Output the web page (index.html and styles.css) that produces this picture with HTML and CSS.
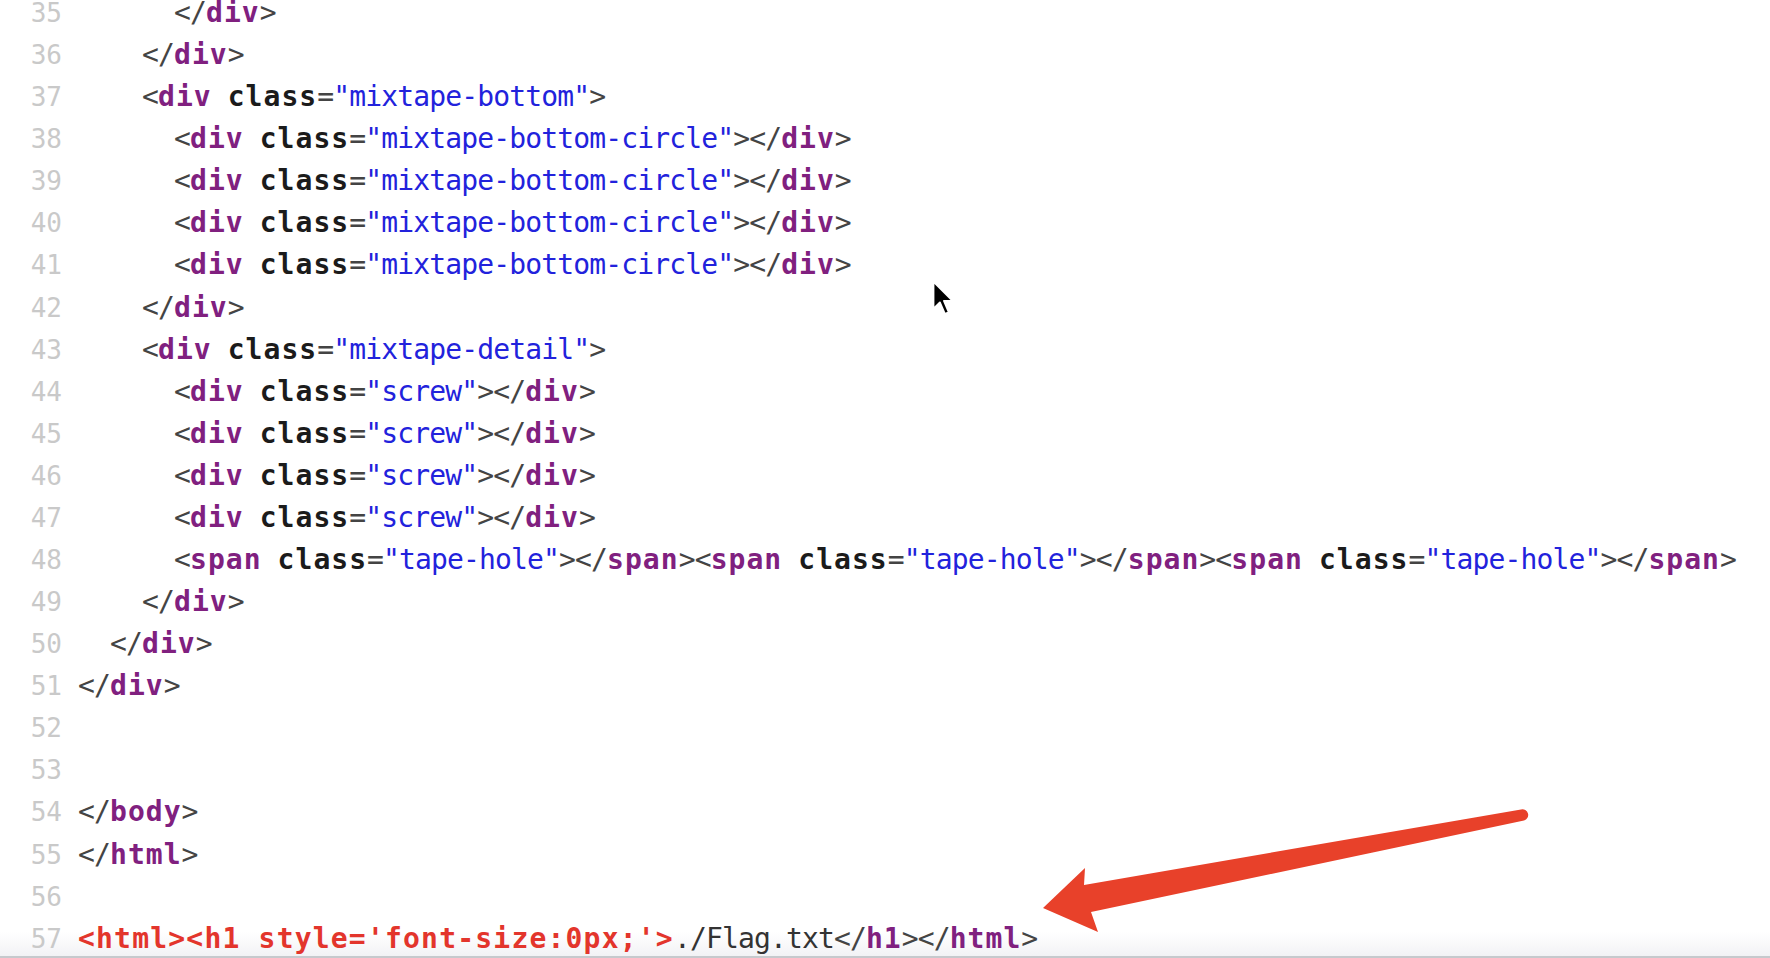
FILE: index.html
```html
<!DOCTYPE html>
<html lang="en">
<head>
    <meta charset="UTF-8">
    <title>mixtape.html</title>
    <link rel="stylesheet" href="styles.css">
</head>
<body>
    <div class="editor">
        <div class="line"><span class="ln">35</span><span class="code i3"><span class="p">&lt;/</span><span class="t">div</span><span class="p">&gt;</span></span></div>
        <div class="line"><span class="ln">36</span><span class="code i2"><span class="p">&lt;/</span><span class="t">div</span><span class="p">&gt;</span></span></div>
        <div class="line"><span class="ln">37</span><span class="code i2"><span class="p">&lt;</span><span class="t">div</span> <span class="a">class</span><span class="p">=</span><span class="s">"mixtape-bottom"</span><span class="p">&gt;</span></span></div>
        <div class="line"><span class="ln">38</span><span class="code i3"><span class="p">&lt;</span><span class="t">div</span> <span class="a">class</span><span class="p">=</span><span class="s">"mixtape-bottom-circle"</span><span class="p">&gt;&lt;/</span><span class="t">div</span><span class="p">&gt;</span></span></div>
        <div class="line"><span class="ln">39</span><span class="code i3"><span class="p">&lt;</span><span class="t">div</span> <span class="a">class</span><span class="p">=</span><span class="s">"mixtape-bottom-circle"</span><span class="p">&gt;&lt;/</span><span class="t">div</span><span class="p">&gt;</span></span></div>
        <div class="line"><span class="ln">40</span><span class="code i3"><span class="p">&lt;</span><span class="t">div</span> <span class="a">class</span><span class="p">=</span><span class="s">"mixtape-bottom-circle"</span><span class="p">&gt;&lt;/</span><span class="t">div</span><span class="p">&gt;</span></span></div>
        <div class="line"><span class="ln">41</span><span class="code i3"><span class="p">&lt;</span><span class="t">div</span> <span class="a">class</span><span class="p">=</span><span class="s">"mixtape-bottom-circle"</span><span class="p">&gt;&lt;/</span><span class="t">div</span><span class="p">&gt;</span></span></div>
        <div class="line"><span class="ln">42</span><span class="code i2"><span class="p">&lt;/</span><span class="t">div</span><span class="p">&gt;</span></span></div>
        <div class="line"><span class="ln">43</span><span class="code i2"><span class="p">&lt;</span><span class="t">div</span> <span class="a">class</span><span class="p">=</span><span class="s">"mixtape-detail"</span><span class="p">&gt;</span></span></div>
        <div class="line"><span class="ln">44</span><span class="code i3"><span class="p">&lt;</span><span class="t">div</span> <span class="a">class</span><span class="p">=</span><span class="s">"screw"</span><span class="p">&gt;&lt;/</span><span class="t">div</span><span class="p">&gt;</span></span></div>
        <div class="line"><span class="ln">45</span><span class="code i3"><span class="p">&lt;</span><span class="t">div</span> <span class="a">class</span><span class="p">=</span><span class="s">"screw"</span><span class="p">&gt;&lt;/</span><span class="t">div</span><span class="p">&gt;</span></span></div>
        <div class="line"><span class="ln">46</span><span class="code i3"><span class="p">&lt;</span><span class="t">div</span> <span class="a">class</span><span class="p">=</span><span class="s">"screw"</span><span class="p">&gt;&lt;/</span><span class="t">div</span><span class="p">&gt;</span></span></div>
        <div class="line"><span class="ln">47</span><span class="code i3"><span class="p">&lt;</span><span class="t">div</span> <span class="a">class</span><span class="p">=</span><span class="s">"screw"</span><span class="p">&gt;&lt;/</span><span class="t">div</span><span class="p">&gt;</span></span></div>
        <div class="line"><span class="ln">48</span><span class="code i3"><span class="p">&lt;</span><span class="t">span</span> <span class="a">class</span><span class="p">=</span><span class="s">"tape-hole"</span><span class="p">&gt;&lt;/</span><span class="t">span</span><span class="p">&gt;&lt;</span><span class="t">span</span> <span class="a">class</span><span class="p">=</span><span class="s">"tape-hole"</span><span class="p">&gt;&lt;/</span><span class="t">span</span><span class="p">&gt;&lt;</span><span class="t">span</span> <span class="a">class</span><span class="p">=</span><span class="s">"tape-hole"</span><span class="p">&gt;&lt;/</span><span class="t">span</span><span class="p">&gt;</span></span></div>
        <div class="line"><span class="ln">49</span><span class="code i2"><span class="p">&lt;/</span><span class="t">div</span><span class="p">&gt;</span></span></div>
        <div class="line"><span class="ln">50</span><span class="code i1"><span class="p">&lt;/</span><span class="t">div</span><span class="p">&gt;</span></span></div>
        <div class="line"><span class="ln">51</span><span class="code"><span class="p">&lt;/</span><span class="t">div</span><span class="p">&gt;</span></span></div>
        <div class="line"><span class="ln">52</span><span class="code"></span></div>
        <div class="line"><span class="ln">53</span><span class="code"></span></div>
        <div class="line"><span class="ln">54</span><span class="code"><span class="p">&lt;/</span><span class="t">body</span><span class="p">&gt;</span></span></div>
        <div class="line"><span class="ln">55</span><span class="code"><span class="p">&lt;/</span><span class="t">html</span><span class="p">&gt;</span></span></div>
        <div class="line"><span class="ln">56</span><span class="code"></span></div>
        <div class="line"><span class="ln">57</span><span class="code"><span class="err">&lt;html&gt;&lt;h1 style='font-size:0px;'&gt;</span><span class="txt">./Flag.txt</span><span class="p">&lt;/</span><span class="t">h1</span><span class="p">&gt;&lt;/</span><span class="t">html</span><span class="p">&gt;</span></span></div>
    </div>

    <div class="scrollbar"></div>

    <!-- cursor -->
    <svg class="cursor" width="26" height="39" viewBox="0 0 16 24">
        <path d="M1.5 1.5 L1.5 18.5 L5.5 14.5 L8.5 21.5 L11 20.5 L8 13.5 L13.5 13.5 Z" fill="#000" stroke="#fff" stroke-width="1.2" stroke-linejoin="round"/>
    </svg>

    <!-- annotation arrow -->
    <svg class="annotation" width="1770" height="958" viewBox="0 0 1770 958">
        <path d="M1043 908 L1085 868 L1084 885 L1521 809.5 A5.7 5.7 0 0 1 1524 820.5 L1091 912 L1098 932 Z" fill="#e8412a"/>
    </svg>
</body>
</html>
```

FILE: styles.css
```css
body, html {
    margin: 0;
    padding: 0;
    width: 1770px;
    height: 958px;
    overflow: hidden;
    background: #fff;
}
body {
    position: relative;
}
.editor {
    position: relative;
    z-index: 1;
    margin-top: -8px;
    font-family: "DejaVu Sans Mono", "Liberation Mono", monospace;
    font-size: 28px;
    line-height: 42.08px;
}
.line {
    display: flex;
    height: 42.08px;
    white-space: pre;
}
.ln {
    width: 62px;
    flex-shrink: 0;
    text-align: right;
    color: #c9c9c9;
    font-size: 26px;
}
.code {
    padding-left: 16px;
    color: #333;
    letter-spacing: -0.86px;
}
.code.i1 { padding-left: 48px; }
.code.i2 { padding-left: 80px; }
.code.i3 { padding-left: 112px; }
.p {
    color: #444;
}
.t {
    color: #80207f;
    font-weight: bold;
    letter-spacing: 1.04px;
}
.a {
    color: #1b1b1b;
    font-weight: bold;
    letter-spacing: 1.04px;
}
.s {
    color: #2222dc;
}
.err {
    color: #e3352c;
    font-weight: bold;
    letter-spacing: 1.2px;
}
.txt {
    color: #333;
}
.scrollbar {
    position: absolute;
    z-index: 0;
    left: 0;
    right: 0;
    bottom: 0;
    height: 24px;
    background: linear-gradient(rgba(244, 244, 247, 0), #f2f2f5);
    border-bottom: 2px solid #c6c9cd;
}
.cursor {
    position: absolute;
    z-index: 2;
    left: 931px;
    top: 279px;
    filter: blur(0.5px);
}
.annotation {
    position: absolute;
    z-index: 2;
    left: 0;
    top: 0;
    pointer-events: none;
}
```
